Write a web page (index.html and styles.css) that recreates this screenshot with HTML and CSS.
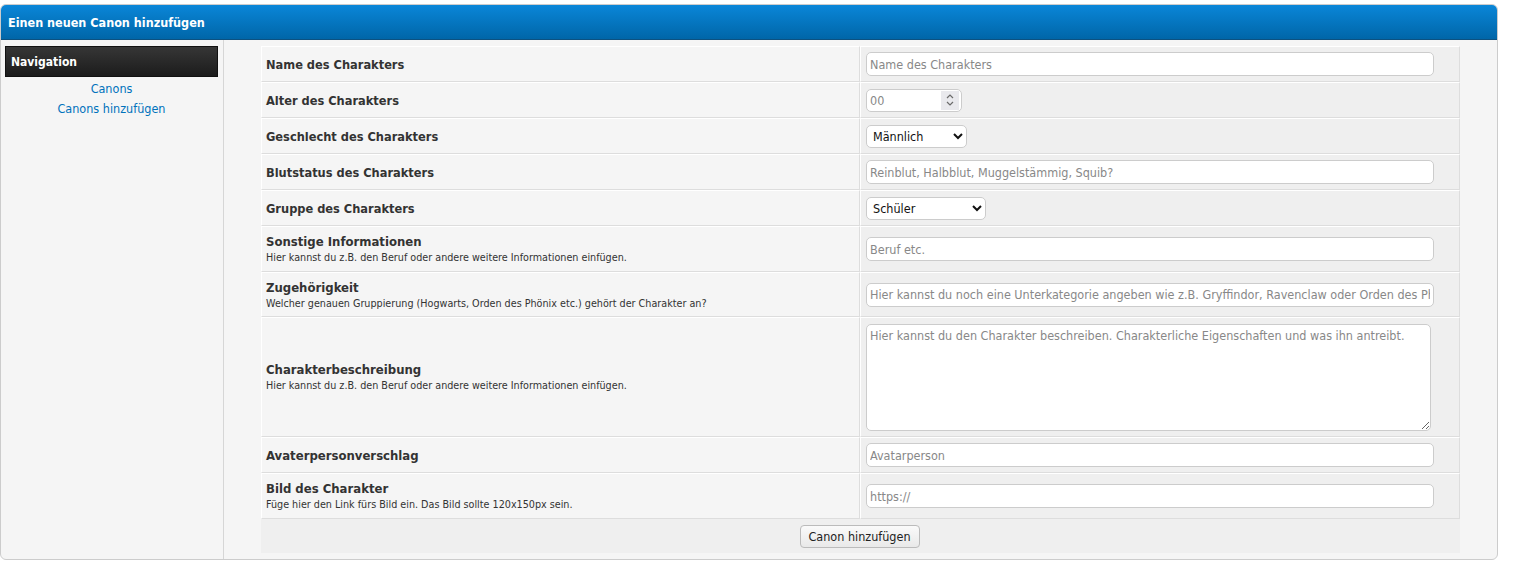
FILE: index.html
```html
<!DOCTYPE html>
<html lang="de">
<head>
<meta charset="utf-8">
<title>Einen neuen Canon hinzufügen</title>
<link rel="stylesheet" href="styles.css">
</head>
<body>
<div class="panel">
  <div class="thead">Einen neuen Canon hinzufügen</div>
  <div class="panel-body">
    <aside class="sidebar">
      <div class="nav-head">Navigation</div>
      <div class="nav-links">
        <a href="#">Canons</a>
        <a href="#">Canons hinzufügen</a>
      </div>
    </aside>
    <main class="content">
      <form class="form">
        <div class="row h36">
          <div class="cell label"><strong>Name des Charakters</strong></div>
          <div class="cell field"><input class="text" type="text" placeholder="Name des Charakters"></div>
        </div>
        <div class="row h36">
          <div class="cell label"><strong>Alter des Charakters</strong></div>
          <div class="cell field">
            <div class="num-wrap">
              <input class="num" type="text" inputmode="numeric" placeholder="00">
              <span class="spin" aria-hidden="true">
                <svg width="10" height="16" viewBox="0 0 10 16"><path d="M2 6 L5 3 L8 6" fill="none" stroke="#6b6b6b" stroke-width="1.2"/><path d="M2 10 L5 13 L8 10" fill="none" stroke="#6b6b6b" stroke-width="1.2"/></svg>
              </span>
            </div>
          </div>
        </div>
        <div class="row h36">
          <div class="cell label"><strong>Geschlecht des Charakters</strong></div>
          <div class="cell field"><select class="sel sel-g"><option>Männlich</option><option>Weiblich</option></select></div>
        </div>
        <div class="row h36">
          <div class="cell label"><strong>Blutstatus des Charakters</strong></div>
          <div class="cell field"><input class="text" type="text" placeholder="Reinblut, Halbblut, Muggelstämmig, Squib?"></div>
        </div>
        <div class="row h36">
          <div class="cell label"><strong>Gruppe des Charakters</strong></div>
          <div class="cell field"><select class="sel sel-s"><option>Schüler</option></select></div>
        </div>
        <div class="row h46">
          <div class="cell label"><strong class="big">Sonstige Informationen</strong><span class="small">Hier kannst du z.B. den Beruf oder andere weitere Informationen einfügen.</span></div>
          <div class="cell field"><input class="text" type="text" placeholder="Beruf etc."></div>
        </div>
        <div class="row h45">
          <div class="cell label"><strong class="big">Zugehörigkeit</strong><span class="small">Welcher genauen Gruppierung (Hogwarts, Orden des Phönix etc.) gehört der Charakter an?</span></div>
          <div class="cell field"><input class="text" type="text" placeholder="Hier kannst du noch eine Unterkategorie angeben wie z.B. Gryffindor, Ravenclaw oder Orden des Phönix."></div>
        </div>
        <div class="row h120">
          <div class="cell label"><strong class="big">Charakterbeschreibung</strong><span class="small">Hier kannst du z.B. den Beruf oder andere weitere Informationen einfügen.</span></div>
          <div class="cell field"><textarea class="area" placeholder="Hier kannst du den Charakter beschreiben. Charakterliche Eigenschaften und was ihn antreibt."></textarea></div>
        </div>
        <div class="row h36">
          <div class="cell label"><strong class="big">Avaterpersonverschlag</strong></div>
          <div class="cell field"><input class="text" type="text" placeholder="Avatarperson"></div>
        </div>
        <div class="row h46">
          <div class="cell label"><strong class="big">Bild des Charakter</strong><span class="small">Füge hier den Link fürs Bild ein. Das Bild sollte 120x150px sein.</span></div>
          <div class="cell field"><input class="text" type="text" placeholder="https://"></div>
        </div>
        <div class="row submit-row">
          <button class="btn" type="button">Canon hinzufügen</button>
        </div>
      </form>
    </main>
  </div>
</div>
</body>
</html>
```

FILE: styles.css
```css
html, body {
  margin: 0;
  padding: 0;
  background: #fff;
}
body {
  font-family: "DejaVu Sans Condensed", "DejaVu Sans", sans-serif;
  font-size: 13px;
  color: #333;
}
.panel {
  margin-top: 4px;
  width: 1496px;
  border: 1px solid #cccccc;
  border-radius: 6px;
  background: #f5f5f5;
  overflow: hidden;
}
.thead {
  height: 33px;
  line-height: 33px;
  padding-top: 1px;
  padding-left: 7px;
  color: #fff;
  font-weight: bold;
  font-size: 12.5px;
  background: linear-gradient(#0a86d8, #0066a8);
  border-bottom: 1px solid #0c5180;
}
.panel-body {
  display: flex;
}
.sidebar {
  width: 213px;
  padding: 6px 5px 6px 4px;
  border-right: 1px solid #d6d6d6;
}
.nav-head {
  height: 29px;
  line-height: 30px;
  padding-left: 5px;
  color: #fff;
  font-weight: bold;
  font-size: 12px;
  background: linear-gradient(#363636, #1c1c1c);
  border: 1px solid #111;
}
.nav-links {
  display: flex;
  flex-direction: column;
  align-items: center;
  padding-top: 2px;
}
.nav-links a {
  color: #0072bc;
  text-decoration: none;
  font-size: 12.5px;
  line-height: 20px;
}
.content {
  flex: 1;
  padding: 6px 0;
}
.form {
  width: 1199px;
  margin: 0 auto;
}
.row {
  display: flex;
}
.h36 { height: 36px; }
.h45 { height: 45px; }
.h46 { height: 46px; }
.h120 { height: 120px; }
.cell {
  box-sizing: border-box;
  border-style: solid;
  border-width: 1px;
  border-color: #fff #dddddd #dddddd #fff;
  display: flex;
  flex-direction: column;
  justify-content: center;
}
.label {
  width: 599px;
  padding: 1px 4px 0;
  background: #f5f5f5;
}
.label strong {
  font-size: 12.7px;
  color: #333;
  line-height: 16px;
}
.label strong.big {
  font-size: 13px;
}
.small {
  font-size: 10.7px;
  line-height: 15px;
  color: #333;
}
.field {
  flex: 1;
  padding: 0 5px;
  background: #efefef;
}
.text, .num, .area, .sel {
  box-sizing: border-box;
  font-family: "DejaVu Sans Condensed", "DejaVu Sans", sans-serif;
  font-size: 12.5px;
  border: 1px solid #cccccc;
  border-radius: 5px;
  background: #fff;
  color: #333;
  outline: none;
}
.text {
  width: 568px;
  height: 24px;
  padding: 0 3px;
}
.text::placeholder, .num::placeholder, .area::placeholder {
  color: #888;
}
.num-wrap {
  position: relative;
  width: 96px;
  height: 23px;
}
.num {
  width: 96px;
  height: 23px;
  padding: 0 24px 0 3px;
}
.spin {
  position: absolute;
  right: 3px;
  top: 2px;
  width: 18px;
  height: 19px;
  background: #e9e9ed;
  display: flex;
  align-items: center;
  justify-content: center;
}
.sel {
  height: 23px;
  padding: 0 2px;
  color: #111;
  font-size: 12.5px;
}
.sel-g { width: 101px; }
.sel-s { width: 120px; }
.area {
  width: 565px;
  height: 107px;
  padding: 3px 3px;
  resize: both;
}
.submit-row {
  height: 34px;
  justify-content: center;
  align-items: center;
  background: #efefef;
}
.btn {
  font-family: "DejaVu Sans Condensed", "DejaVu Sans", sans-serif;
  font-size: 12.5px;
  color: #222;
  width: 120px;
  height: 23px;
  margin-right: 2px;
  border: 1px solid #bbbbbb;
  border-radius: 4px;
  background: linear-gradient(#fafafa, #e9e9e9);
  padding: 0;
}
```
